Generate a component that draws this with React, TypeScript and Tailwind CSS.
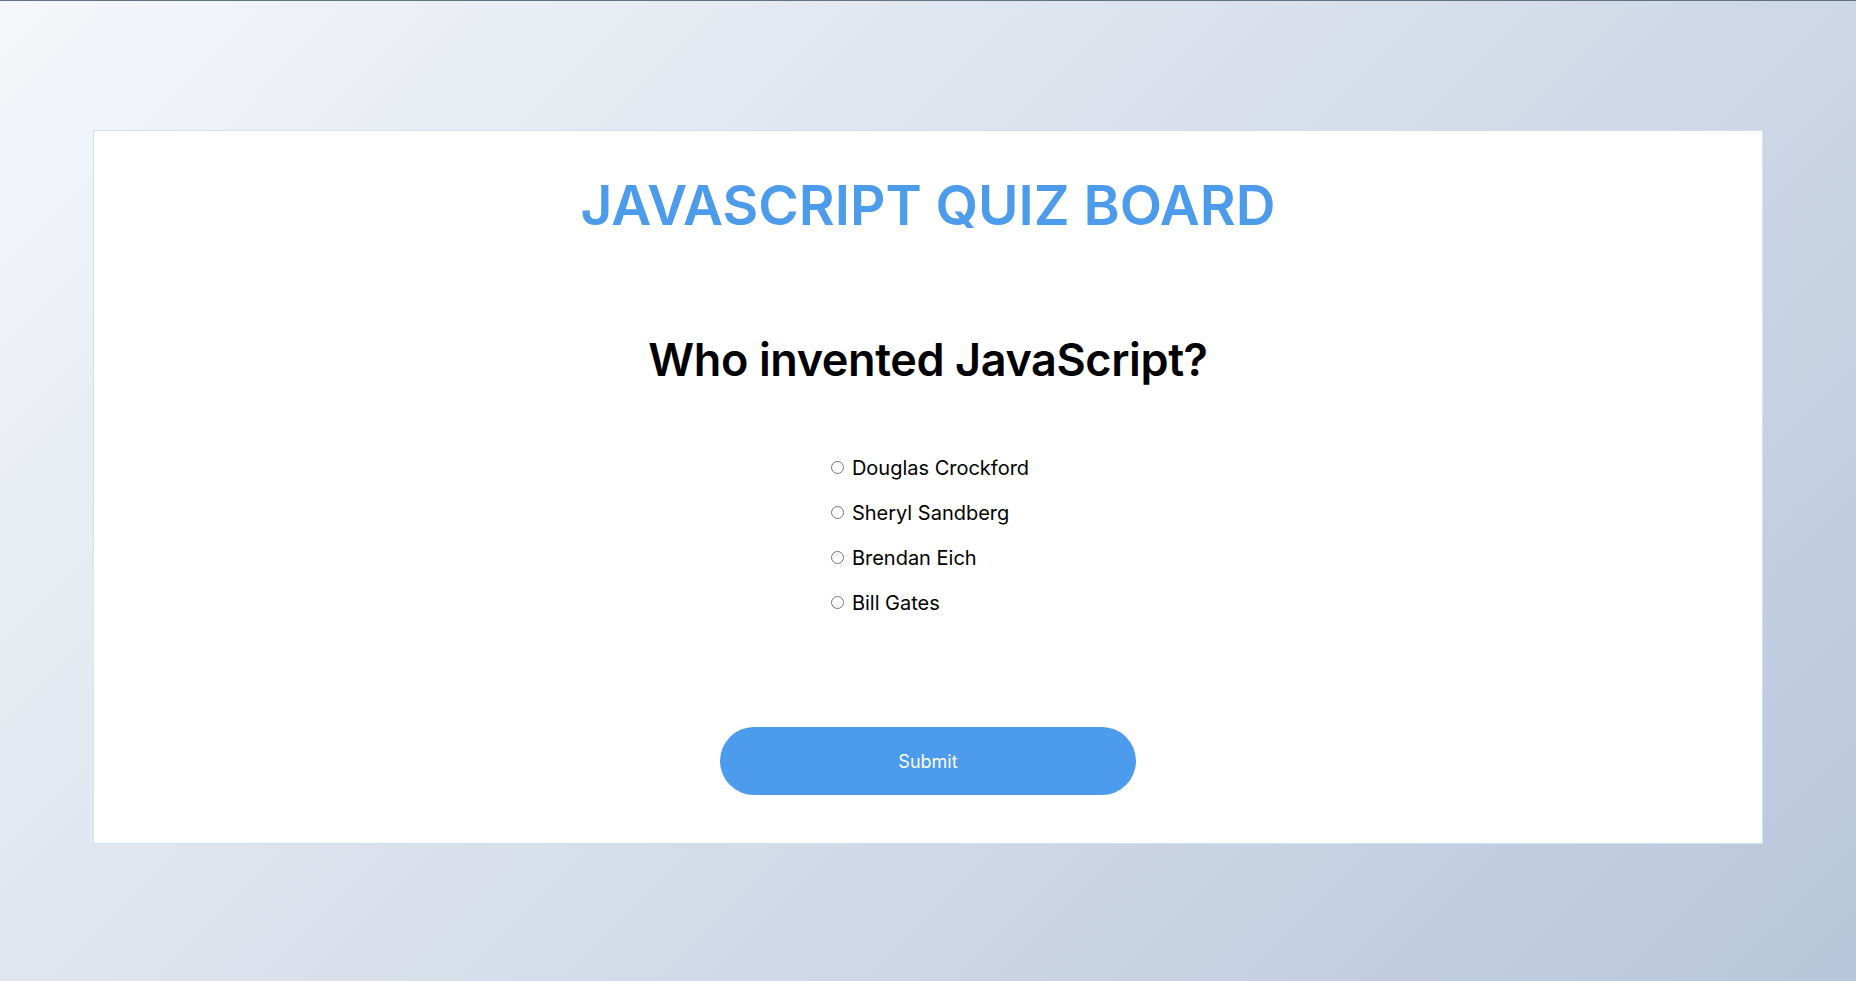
import { useState } from 'react';

const OPTIONS = ['Douglas Crockford', 'Sheryl Sandberg', 'Brendan Eich', 'Bill Gates'];

export default function App() {
  const [answer, setAnswer] = useState<string | null>(null);

  return (
    <div
      className="min-h-screen border-t border-[#5f7482] bg-[linear-gradient(135deg,#f5f7fa,#b8c6db)] pt-[129px]"
      style={{ fontFamily: 'Inter, "Noto Sans", sans-serif' }}
    >
      <div className="mx-auto flex w-[90%] flex-col items-center border border-[#cfe3f7] bg-white px-8 pt-[38px] pb-[48px]">
        <h1 className="text-[55px] leading-[72px] font-semibold text-[#4d9beb]">JAVASCRIPT QUIZ BOARD</h1>

        <h2 className="mt-[90px] text-[45px] leading-[58px] font-semibold tracking-[-0.4px] text-black">
          Who invented JavaScript?
        </h2>

        {/* answers: block is centred, labels stay left-aligned */}
        <ul className="mt-[56px] ml-[4px] flex flex-col">
          {OPTIONS.map((opt) => (
            <li key={opt}>
              <label className="flex h-[45px] cursor-pointer items-center text-[20px] text-black">
                <input
                  type="radio"
                  name="answer"
                  className="m-0 mr-[8px] h-[13px] w-[13px]"
                  checked={answer === opt}
                  onChange={() => setAnswer(opt)}
                />
                {opt}
              </label>
            </li>
          ))}
        </ul>

        <button className="mt-[102px] h-[68px] w-[416px] rounded-full bg-[#4d9bec] text-[18px] text-white">
          Submit
        </button>
      </div>
    </div>
  );
}
